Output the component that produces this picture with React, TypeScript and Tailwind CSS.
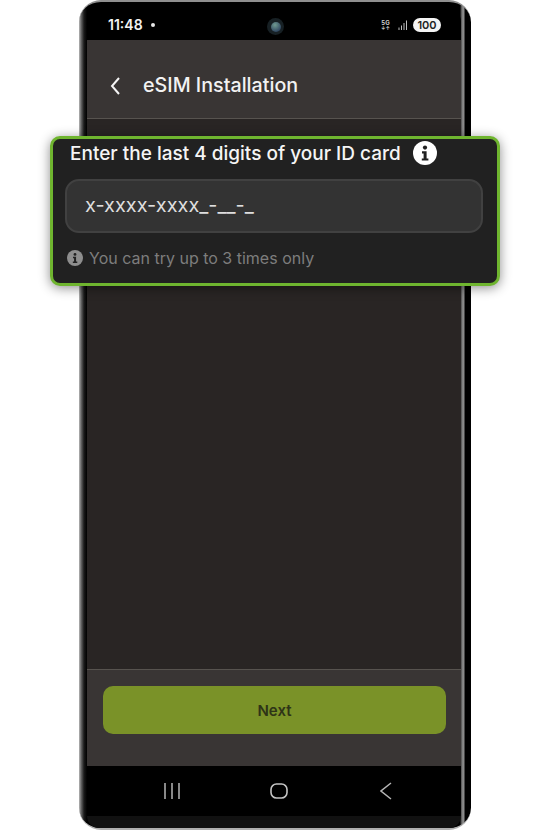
import React from "react";

function InfoIcon({ size, bg, fg }: { size: number; bg: string; fg: string }) {
  return (
    <svg width={size} height={size} viewBox="0 0 24 24" className="shrink-0">
      <circle cx="12" cy="12" r="12" fill={bg} />
      <circle cx="12" cy="6.6" r="2.1" fill={fg} />
      <path d="M9 10.2h4.6v7.2H15.4v2.2H8.8v-2.2h1.8v-5H9z" fill={fg} />
    </svg>
  );
}

export default function App() {
  return (
    <div className="relative h-[832px] w-[550px] overflow-hidden bg-white font-['Inter',sans-serif]">
      <div className="ml-[79px] h-[830px] w-[392px] rounded-[22px] border-y-2 border-t-[#8f8f8f] border-b-[#b0b0b0] bg-[linear-gradient(90deg,#b8b8b8_0,#6a6a6a_2px,#1a1a1a_5px,#000_8px,#000_381px,#7c7c7c_383px,#8e8e8e_385px,#000_386px)]">
        <div className="flex h-full flex-col pl-[8px] pr-[10px] pt-[4px]">
          {/* Status bar */}
          <div className="relative flex h-[34px] shrink-0 items-center justify-between rounded-t-[16px] bg-black pl-[21px] pr-[20px] pt-[4px]">
            <div className="flex items-center gap-[8px]">
              <span className="text-[14px] font-semibold leading-none text-[#f2f2f2]">11:48</span>
              <span className="h-[4px] w-[4px] rounded-full bg-[#e8e8e8]" />
            </div>
            <div className="absolute left-[180px] top-[12px] flex h-[17px] w-[17px] items-center justify-center rounded-full bg-[#172024]">
              <div className="h-[10px] w-[10px] rounded-full bg-[radial-gradient(circle_at_40%_30%,#6f9a90,#2f4560_75%)]" />
            </div>
            <div className="flex items-center gap-[5px]">
              <div className="flex flex-col items-center text-[#cfcfcf]">
                <span className="text-[6px] font-bold leading-[6px]">5G</span>
                <span className="text-[5px] font-bold leading-[5px]">↓↑</span>
              </div>
              <svg width="10" height="10" viewBox="0 0 10 10" className="ml-[3px]">
                <rect x="0.5" y="7.5" width="1" height="2.5" fill="#bdbdbd" />
                <rect x="3" y="5.5" width="1" height="4.5" fill="#bdbdbd" />
                <rect x="5.5" y="3" width="1" height="7" fill="#bdbdbd" />
                <rect x="8" y="0.5" width="1" height="9.5" fill="#bdbdbd" />
              </svg>
              <div className="flex h-[14px] w-[28px] items-center justify-center rounded-full bg-[#f4f4f4] text-[11px] font-semibold leading-none text-[#222]">
                100
              </div>
            </div>
          </div>

          {/* App header */}
          <div className="flex h-[79px] shrink-0 items-center border-b border-[#57534f] bg-[#393534] pl-[22px] pt-[14px]">
            <svg width="12" height="20" viewBox="0 0 12 20" fill="none" stroke="#f5f5f5" strokeWidth="2">
              <path d="M10 2 3 10l7 8" />
            </svg>
            <span className="ml-[22px] text-[19.7px] font-medium leading-none text-[#f2f2f2]">eSIM Installation</span>
          </div>

          {/* Content */}
          <div className="flex-1 bg-[#292524]" />

          {/* Footer */}
          <div className="flex h-[97px] shrink-0 flex-col border-t border-[#57534f] bg-[#393534] pl-[16px] pr-[15px] pt-[16px]">
            <div className="flex h-[48px] items-center justify-center rounded-[10px] bg-[#7a9228] pt-[2px] text-[15px] font-semibold text-[#2e3417]">
              Next
            </div>
          </div>

          {/* Nav bar */}
          <div className="flex h-[50px] shrink-0 items-center justify-between bg-black pl-[76px] pr-[69px]">
            <svg width="18" height="16" viewBox="0 0 18 16" stroke="#b5b5b5" strokeWidth="1.5">
              <path d="M2 0v16M9 0v16M16 0v16" />
            </svg>
            <svg width="18" height="16" viewBox="0 0 18 16" fill="none" stroke="#c4c4c4" strokeWidth="1.6" className="mr-[4px]">
              <rect x="1" y="1" width="16" height="14" rx="5.5" />
            </svg>
            <svg width="12" height="18" viewBox="0 0 12 18" fill="none" stroke="#b5b5b5" strokeWidth="1.5">
              <path d="M11 1 1 9l10 8" />
            </svg>
          </div>
          <div className="h-[12px] shrink-0 rounded-b-[16px] bg-[#111111]" />
        </div>
      </div>

      {/* Highlight card */}
      <div className="absolute left-[50px] top-[136px] flex h-[150px] w-[450px] flex-col rounded-[10px] border-[3px] border-[#6fb52f] bg-[#212121] shadow-[0_2px_12px_rgba(0,0,0,0.45)]">
        <div className="ml-[17px] mt-[2px] flex h-[24px] items-center">
          <span className="text-[19px] font-medium leading-none text-[#f5f5f5]">Enter the last 4 digits of your ID card</span>
          <span className="ml-[12px]"><InfoIcon size={24} bg="#ffffff" fg="#212121" /></span>
        </div>
        <div className="ml-[12px] mr-[14px] mt-[14px] flex h-[54px] items-center rounded-[14px] border-2 border-[#414141] bg-[#333333] pl-[18px]">
          <span className="text-[19.9px] leading-none text-[#dedede]">x-xxxx-xxxx_-__-_</span>
        </div>
        <div className="ml-[14px] mt-[17px] flex items-center gap-[6px]">
          <InfoIcon size={16} bg="#8e8e8e" fg="#212121" />
          <span className="text-[16px] leading-none text-[#7d7d7d]">You can try up to 3 times only</span>
        </div>
      </div>
    </div>
  );
}
